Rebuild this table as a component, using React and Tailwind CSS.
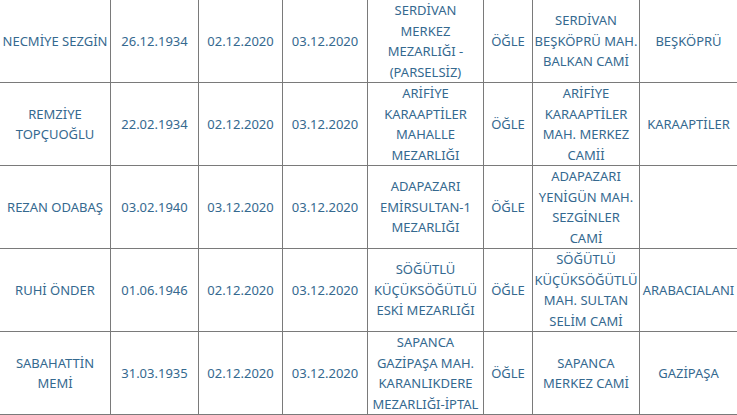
import React from "react";

const rows = [
  ["NECMİYE SEZGİN", "26.12.1934", "02.12.2020", "03.12.2020", "SERDİVAN MERKEZ MEZARLIĞI - (PARSELSİZ)", "ÖĞLE", "SERDİVAN BEŞKÖPRÜ MAH. BALKAN CAMİ", "BEŞKÖPRÜ"],
  ["REMZİYE TOPÇUOĞLU", "22.02.1934", "02.12.2020", "03.12.2020", "ARİFİYE KARAAPTİLER MAHALLE MEZARLIĞI", "ÖĞLE", "ARİFİYE KARAAPTİLER MAH. MERKEZ CAMİİ", "KARAAPTİLER"],
  ["REZAN ODABAŞ", "03.02.1940", "03.12.2020", "03.12.2020", "ADAPAZARI EMİRSULTAN-1 MEZARLIĞI", "ÖĞLE", "ADAPAZARI YENİGÜN MAH. SEZGİNLER\nCAMİ", ""],
  ["RUHİ ÖNDER", "01.06.1946", "02.12.2020", "03.12.2020", "SÖĞÜTLÜ KÜÇÜKSÖĞÜTLÜ ESKİ MEZARLIĞI", "ÖĞLE", "SÖĞÜTLÜ KÜÇÜKSÖĞÜTLÜ MAH. SULTAN SELİM CAMİ", "ARABACIALANI"],
  ["SABAHATTİN MEMİ", "31.03.1935", "02.12.2020", "03.12.2020", "SAPANCA GAZİPAŞA MAH. KARANLIKDERE MEZARLIĞI-İPTAL", "ÖĞLE", "SAPANCA MERKEZ CAMİ", "GAZİPAŞA"],
];

export default function App() {
  return (
    <div lang="tr" className="w-[737px] h-[415px] overflow-hidden bg-white">
      <table
        lang="tr"
        className="table-fixed border-collapse -mt-px -ml-px w-[738px] text-[13px] leading-[20.5px] text-[#35698f]"
        style={{ fontFamily: "'Noto Sans', 'Open Sans', sans-serif" }}
      >
        <colgroup>
          <col className="w-[111px]" />
          <col className="w-[88px]" />
          <col className="w-[84px]" />
          <col className="w-[85px]" />
          <col className="w-[116px]" />
          <col className="w-[49px]" />
          <col className="w-[107px]" />
          <col className="w-[98px]" />
        </colgroup>
        <tbody>
          {rows.map((r, i) => (
            <tr key={i} className="h-[83px]">
              {r.map((c, j) => (
                <td
                  key={j}
                  className="border border-[#7a7a7a] text-center align-middle px-px py-0 whitespace-pre-line"
                >
                  {c}
                </td>
              ))}
            </tr>
          ))}
        </tbody>
      </table>
    </div>
  );
}
